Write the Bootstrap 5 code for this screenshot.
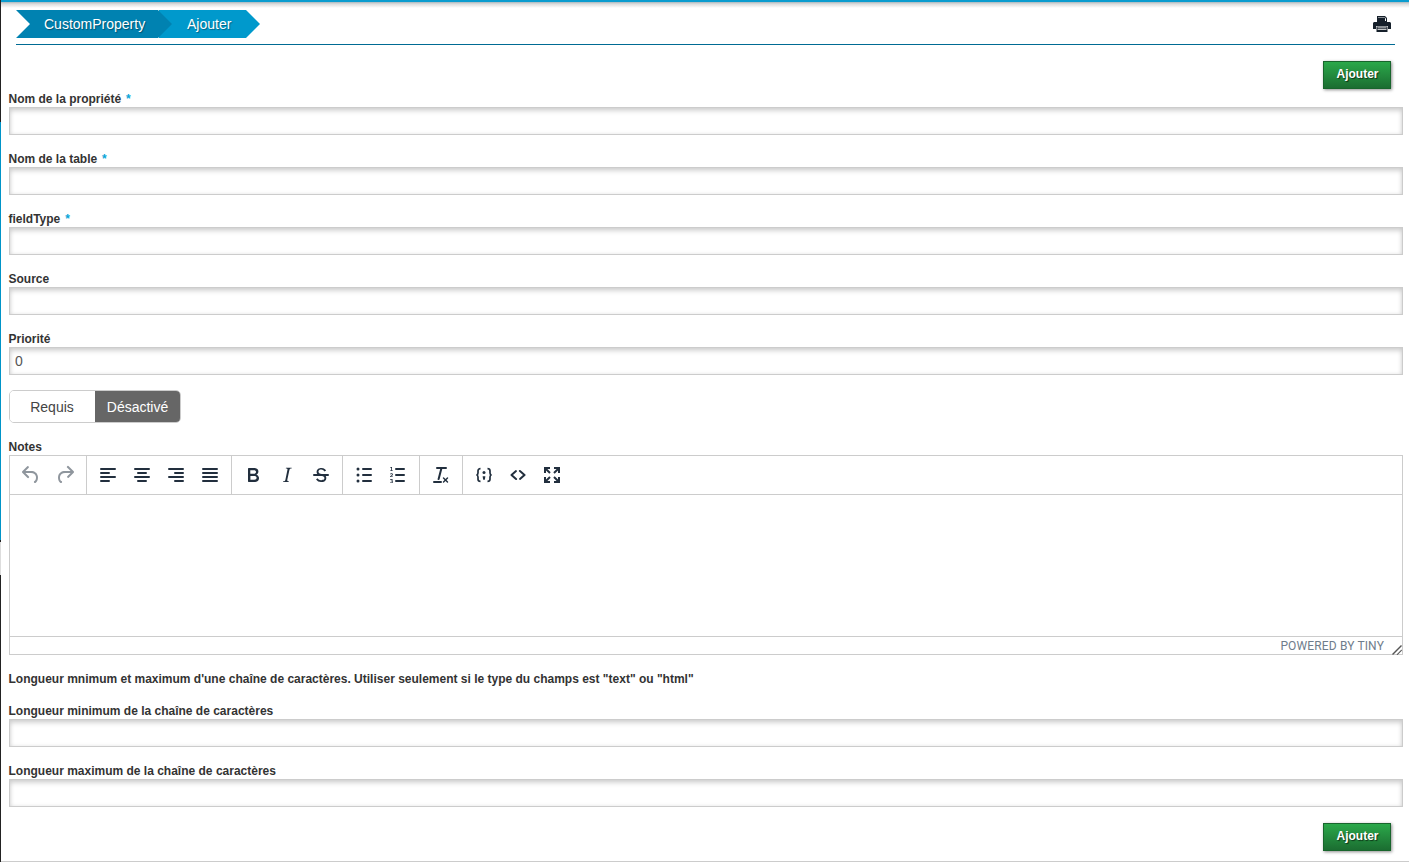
<!DOCTYPE html>
<html lang="fr">
<head>
<meta charset="utf-8">
<title>CustomProperty</title>
<link href="https://cdn.jsdelivr.net/npm/bootstrap@5.3.0/dist/css/bootstrap.min.css" rel="stylesheet">
<style>
html,body{height:862px;overflow:hidden}
body{font-family:"Liberation Sans",Arial,sans-serif;font-size:12px;color:#333;background:#fff}
.page-frame{height:862px;padding-left:1px;background:linear-gradient(to bottom,#222 0 122px,#0094c8 122px 540px,#222 540px 542px,#ddd 542px 575px,#222 575px 100%) no-repeat left top/1px 100%}
.page-inner{height:862px;border-bottom:1px solid #ccc;background:#fff}
.top-edge{height:8px;background:linear-gradient(to bottom,#0a9ccf 0 2px,#aab8be 2px,#dcdcdc 4px,#fff 8px)}
.head-zone{margin:2px 14px 0 15px;border-bottom:1px solid #006b94;height:35px}
.crumb-first,.crumb-last{height:28px;line-height:28px;color:#fff;font-size:14px;text-shadow:1px 1px 1px rgba(0,0,0,.35)}
.crumb-first{width:156px;padding-left:28px;background:#0082b1;clip-path:polygon(0 0,142px 0,156px 50%,142px 100%,0 100%,14px 50%);position:relative;z-index:1}
.crumb-last{width:101px;margin-left:-13px;padding-left:28px;background:#0099cc;clip-path:polygon(0 0,87px 0,101px 50%,87px 100%,0 100%)}
.print-mark{width:18px;height:18px;margin:5px 4px 0 0}
.form-zone{padding:0 6px 0 8px}
.action-row{padding-right:12px;margin-top:16px}
.add-btn{width:68px;height:28px;padding:0 0 3px 1px;font-size:12px;font-weight:700;color:#fff;border:1px solid #18652c;border-radius:0;background:linear-gradient(to bottom,#2ba84a,#1b6d31);box-shadow:1px 1px 3px rgba(0,0,0,.45);text-shadow:1px 1px 1px rgba(0,0,0,.6)}
.add-btn:hover{color:#fff}
.field-name{display:block;height:18px;line-height:20px;margin:0 0 0 -.5px;font-weight:700;color:#333}
.field-name b{color:#0aa5d8;margin-left:1.500px}
.field-box{display:block;width:100%;height:28px;padding:0 5px;border:1px solid #ccc;border-radius:0;font-size:14px;color:#555;background:#fff;box-shadow:inset 0 3px 5px rgba(0,0,0,.16),inset 0 0 4px rgba(0,0,0,.08);margin-bottom:14px;outline:0}
.toggle-set{width:172px;height:33px;margin:15px 0 14px;border:1px solid #ccc;border-radius:5px;overflow:hidden}
.toggle-set .btn{flex:0 0 85px;padding:0 1px 0 0;border:0;border-radius:0;font-size:14px;line-height:33px;height:31px;color:#444;background:#fff}
.toggle-set .btn.is-on{padding:0;color:#fff;background:#666}
.editor-shell{height:200px;border:1px solid #ccc}
.editor-tools{height:39px;border-bottom:1px solid #ccc}
.tool-group{padding:2px 4px 3px;border-right:1px solid #ccc;height:38px}
.tool-group:last-child{border-right:0}
.tool-btn{width:34px;height:34px;display:flex;align-items:center;justify-content:center;padding:0 0 1px;background:none;border:0}
.tool-btn svg{width:24px;height:24px;fill:#222f3e}
.tool-btn.is-dim svg{opacity:.5}
.brace-mark{fill:none!important;stroke:#222f3e;stroke-width:1.700}
.editor-body{height:141px}
.editor-status{height:19px;border-top:1px solid #ccc;line-height:19px;color:#6f7d8b;font-family:Roboto,"Liberation Sans",sans-serif;font-size:12px;letter-spacing:.14px}
.grip{width:10px;height:10px;margin:8px 0 0 8px;fill:#555}
.note-line{height:18px;line-height:20px;margin:14px 0 14px -.5px;font-weight:700}
</style>
</head>
<body>
<div class="page-frame">
 <div class="page-inner">
  <div class="top-edge"></div>
  <div class="head-zone d-flex justify-content-between">
    <div class="d-flex">
      <div class="crumb-first">CustomProperty</div>
      <div class="crumb-last">Ajouter</div>
    </div>
    <svg class="print-mark" viewBox="0 0 18 18" aria-hidden="true"><path fill="#16202b" d="M4 1h8l2 2v4H4z"/><path fill="#fff" d="M5 2h6.500l1.500 1.500V6H5z"/><path fill="#16202b" d="M5 2.500h7v3.500H5z"/><path fill="#16202b" d="M1.500 7h15c.8 0 1.500.7 1.500 1.500V14h-3v-3H3v3H0V8.500C0 7.700.7 7 1.500 7z"/><path fill="#16202b" d="M3.500 11.500h11V17h-11z"/><path fill="#fff" d="M4.500 12.500h9V13.300h-9zM4.500 14.300h9v.8h-9z"/></svg>
  </div>
  <div class="form-zone">
    <div class="action-row d-flex justify-content-end"><button type="button" class="btn add-btn">Ajouter</button></div>
    <label class="field-name">Nom de la propriété <b>*</b></label>
    <input class="field-box" type="text">
    <label class="field-name">Nom de la table <b>*</b></label>
    <input class="field-box" type="text">
    <label class="field-name">fieldType <b>*</b></label>
    <input class="field-box" type="text">
    <label class="field-name">Source</label>
    <input class="field-box" type="text">
    <label class="field-name">Priorité</label>
    <input class="field-box" type="text" value="0">
    <div class="toggle-set d-flex">
      <button type="button" class="btn">Requis</button>
      <button type="button" class="btn is-on">Désactivé</button>
    </div>
    <label class="field-name">Notes</label>
    <div class="editor-shell">
      <div class="editor-tools d-flex">
        <div class="tool-group d-flex">
          <span class="tool-btn is-dim"><svg viewBox="0 0 24 24"><path d="M6.400 8H12c3.700 0 6.200 2 6.800 5.100.6 2.700-.4 5.600-2.300 6.800a1 1 0 0 1-1-1.800c1.100-.6 1.800-2.700 1.400-4.600-.5-2.100-2.100-3.500-4.900-3.500H6.400l3.300 3.300a1 1 0 1 1-1.400 1.400l-5-5a1 1 0 0 1 0-1.400l5-5a1 1 0 0 1 1.400 1.400L6.400 8z"/></svg></span>
          <span class="tool-btn is-dim"><svg viewBox="0 0 24 24"><path d="M17.600 10H12c-2.800 0-4.400 1.400-4.900 3.500-.4 2 .3 4 1.400 4.600a1 1 0 1 1-1 1.800c-2-1.200-2.900-4.100-2.300-6.800.6-3.100 3.100-5.100 6.800-5.100h5.600l-3.300-3.300a1 1 0 1 1 1.400-1.400l5 5a1 1 0 0 1 0 1.400l-5 5a1 1 0 0 1-1.400-1.400l3.300-3.300z"/></svg></span>
        </div>
        <div class="tool-group d-flex">
          <span class="tool-btn"><svg viewBox="0 0 24 24"><path d="M5 5h14a1 1 0 0 1 0 2H5a1 1 0 1 1 0-2zm0 4h8a1 1 0 0 1 0 2H5a1 1 0 1 1 0-2zm0 8h8a1 1 0 0 1 0 2H5a1 1 0 0 1 0-2zm0-4h14a1 1 0 0 1 0 2H5a1 1 0 0 1 0-2z"/></svg></span>
          <span class="tool-btn"><svg viewBox="0 0 24 24"><path d="M5 5h14a1 1 0 0 1 0 2H5a1 1 0 1 1 0-2zm3 4h8a1 1 0 0 1 0 2H8a1 1 0 1 1 0-2zm0 8h8a1 1 0 0 1 0 2H8a1 1 0 0 1 0-2zm-3-4h14a1 1 0 0 1 0 2H5a1 1 0 0 1 0-2z"/></svg></span>
          <span class="tool-btn"><svg viewBox="0 0 24 24"><path d="M5 5h14a1 1 0 0 1 0 2H5a1 1 0 1 1 0-2zm6 4h8a1 1 0 0 1 0 2h-8a1 1 0 0 1 0-2zm0 8h8a1 1 0 0 1 0 2h-8a1 1 0 0 1 0-2zm-6-4h14a1 1 0 0 1 0 2H5a1 1 0 0 1 0-2z"/></svg></span>
          <span class="tool-btn"><svg viewBox="0 0 24 24"><path d="M5 5h14a1 1 0 0 1 0 2H5a1 1 0 1 1 0-2zm0 4h14a1 1 0 0 1 0 2H5a1 1 0 1 1 0-2zm0 4h14a1 1 0 0 1 0 2H5a1 1 0 0 1 0-2zm0 4h14a1 1 0 0 1 0 2H5a1 1 0 0 1 0-2z"/></svg></span>
        </div>
        <div class="tool-group d-flex">
          <span class="tool-btn"><svg viewBox="0 0 24 24"><path d="M7.800 19c-.3 0-.5 0-.6-.2l-.2-.5V5.700c0-.2 0-.4.2-.5l.6-.2h5c1.500 0 2.700.3 3.500 1 .7.6 1.100 1.400 1.100 2.500a3 3 0 0 1-.6 1.900c-.4.6-1 1-1.600 1.200.4.100.9.300 1.300.6s.8.700 1 1.200c.4.400.5 1 .5 1.600 0 1.300-.4 2.300-1.300 3-.8.700-2.100 1-3.800 1H7.800zm5-8.300c.6 0 1.200-.1 1.600-.5.4-.3.6-.7.6-1.300 0-1.100-.8-1.700-2.300-1.700H9.300v3.500h3.500zm.5 6c.7 0 1.300-.1 1.700-.4.400-.4.600-.9.600-1.500s-.2-1-.7-1.400c-.4-.3-1-.4-2-.4H9.400v3.700h3.900z"/></svg></span>
          <span class="tool-btn"><svg viewBox="0 0 24 24"><path d="M16.700 4.700l-.1.900h-.3c-.6 0-1 0-1.400.3-.3.300-.4.600-.5 1.100l-2.100 9.800v.6c0 .5.400.8 1.400.8h.2l-.2.800H8l.2-.8h.2c1.100 0 1.800-.5 2-1.500l2-9.800.1-.5c0-.6-.4-.8-1.400-.8h-.3l.2-.9h5.700z"/></svg></span>
          <span class="tool-btn"><svg viewBox="0 0 24 24"><path d="M15.600 8.500c-.5-.7-1-1.100-1.300-1.300-.6-.4-1.300-.6-2-.6-2.700 0-2.800 1.700-2.800 2.100 0 1.600 1.800 2 3.200 2.300 4.400.9 4.600 2.800 4.600 3.900 0 1.400-.7 4.100-5 4.100A6.200 6.200 0 0 1 7 16.400l1.500-1.100c.4.600 1.600 2 3.700 2 1.600 0 2.500-.4 3-1.200.4-.8.300-2-.8-2.600-.7-.4-1.600-.7-2.900-1-1-.2-3.900-.8-3.900-3.600C7.600 6 10.300 5 12.400 5c2.900 0 4.200 1.600 4.700 2.400l-1.500 1.100z"/><path d="M5 11h14a1 1 0 0 1 0 2H5a1 1 0 0 1 0-2z"/></svg></span>
        </div>
        <div class="tool-group d-flex">
          <span class="tool-btn"><svg viewBox="0 0 24 24"><path d="M11 5h8a1 1 0 0 1 0 2h-8a1 1 0 0 1 0-2zm0 6h8a1 1 0 0 1 0 2h-8a1 1 0 0 1 0-2zm0 6h8a1 1 0 0 1 0 2h-8a1 1 0 0 1 0-2z"/><circle cx="6" cy="6" r="1.500"/><circle cx="6" cy="12" r="1.500"/><circle cx="6" cy="18" r="1.500"/></svg></span>
          <span class="tool-btn"><svg viewBox="0 0 24 24"><path d="M10 17h8a1 1 0 0 1 0 2h-8a1 1 0 0 1 0-2zm0-6h8a1 1 0 0 1 0 2h-8a1 1 0 0 1 0-2zm0-6h8a1 1 0 0 1 0 2h-8a1 1 0 1 1 0-2z"/><path d="M6 4v3.500h1V8H4v-.5h1.200V5H4.200v-.5L5.300 4zM4 10.800c.3-.4.800-.6 1.400-.6.900 0 1.500.5 1.500 1.200 0 .5-.3.900-.9 1.300l-.9.700h1.900v.6H4v-.5l1.500-1.200c.4-.3.600-.6.600-.8 0-.3-.3-.6-.7-.6-.3 0-.6.200-.9.500zM4 16.300c.3-.2.800-.3 1.300-.3.900 0 1.500.4 1.500 1 0 .4-.2.700-.6.900.5.100.8.500.8 1 0 .7-.7 1.100-1.600 1.100-.5 0-1-.1-1.400-.4l.2-.5c.4.200.8.300 1.100.3.500 0 .9-.2.900-.6 0-.3-.3-.5-.9-.5h-.5v-.6h.5c.4 0 .7-.2.700-.5s-.3-.5-.7-.5c-.3 0-.7.100-1 .2z"/></svg></span>
        </div>
        <div class="tool-group d-flex">
          <span class="tool-btn"><svg viewBox="0 0 24 24"><path d="M13.200 6a1 1 0 0 1 0 .2l-2.600 10a1 1 0 0 1-1 .8h-.2a.8.8 0 0 1-.8-1l2.600-10H8a1 1 0 1 1 0-2h9a1 1 0 0 1 0 2h-3.800zM5 18h7a1 1 0 0 1 0 2H5a1 1 0 0 1 0-2zm13 1.500L16.500 18 15 19.500a.7.7 0 0 1-1-1l1.500-1.500-1.500-1.500a.7.7 0 0 1 1-1l1.500 1.500 1.500-1.500a.7.7 0 0 1 1 1L17.500 17l1.500 1.500a.7.7 0 0 1-1 1z"/></svg></span>
        </div>
        <div class="tool-group d-flex">
          <span class="tool-btn"><svg viewBox="0 0 24 24"><path class="brace-mark" d="M8.500 5.700c-1.800 0-2.500.8-2.500 2.100v2.300c0 1.100-.5 1.800-1.600 1.900 1.100.1 1.600.8 1.600 1.900v2.300c0 1.300.7 2.100 2.500 2.100M15.500 5.700c1.800 0 2.500.8 2.500 2.100v2.300c0 1.100.5 1.800 1.600 1.900-1.100.1-1.600.8-1.600 1.900v2.300c0 1.300-.7 2.100-2.500 2.100"/><circle cx="12" cy="9.500" r="1.500"/><path d="M10.600 13.200h2.800l-.6 3.600h-1.600z"/></svg></span>
          <span class="tool-btn"><svg viewBox="0 0 24 24"><path d="M9.400 7.300a1 1 0 0 1 1.300 1.500L7 12l3.700 3.200a1 1 0 1 1-1.300 1.500l-4.600-4a1 1 0 0 1 0-1.500l4.600-3.900zm5.200 0l4.600 3.900a1 1 0 0 1 0 1.600l-4.600 3.900a1 1 0 0 1-1.300-1.500L17 12l-3.700-3.200a1 1 0 1 1 1.300-1.500z"/></svg></span>
          <span class="tool-btn"><svg viewBox="0 0 24 24"><path d="M4 4h6v2H7.400l3.300 3.300-1.400 1.400L6 7.400V10H4zm10 0h6v6h-2V7.400l-3.300 3.300-1.400-1.400L16.600 6H14zM9.300 13.300l1.400 1.400L7.400 18H10v2H4v-6h2v2.600zm5.400 0l3.300 3.300V14h2v6h-6v-2h2.600l-3.300-3.300z"/></svg></span>
        </div>
      </div>
      <div class="editor-body"></div>
      <div class="editor-status d-flex justify-content-end">
        <span>POWERED BY TINY</span>
        <svg class="grip" viewBox="0 0 10 10" aria-hidden="true"><path d="M9 0l1 1-9 9-1-1zM9.500 4.500l.5 1-4.500 4.500-1-.5z"/></svg>
      </div>
    </div>
    <p class="note-line">Longueur mnimum et maximum d'une chaîne de caractères. Utiliser seulement si le type du champs est "text" ou "html"</p>
    <label class="field-name">Longueur minimum de la chaîne de caractères</label>
    <input class="field-box" type="text">
    <label class="field-name">Longueur maximum de la chaîne de caractères</label>
    <input class="field-box" type="text">
    <div class="action-row d-flex justify-content-end"><button type="button" class="btn add-btn">Ajouter</button></div>
  </div>
 </div>
</div>
<script src="https://cdn.jsdelivr.net/npm/bootstrap@5.3.0/dist/js/bootstrap.bundle.min.js"></script>
</body>
</html>
